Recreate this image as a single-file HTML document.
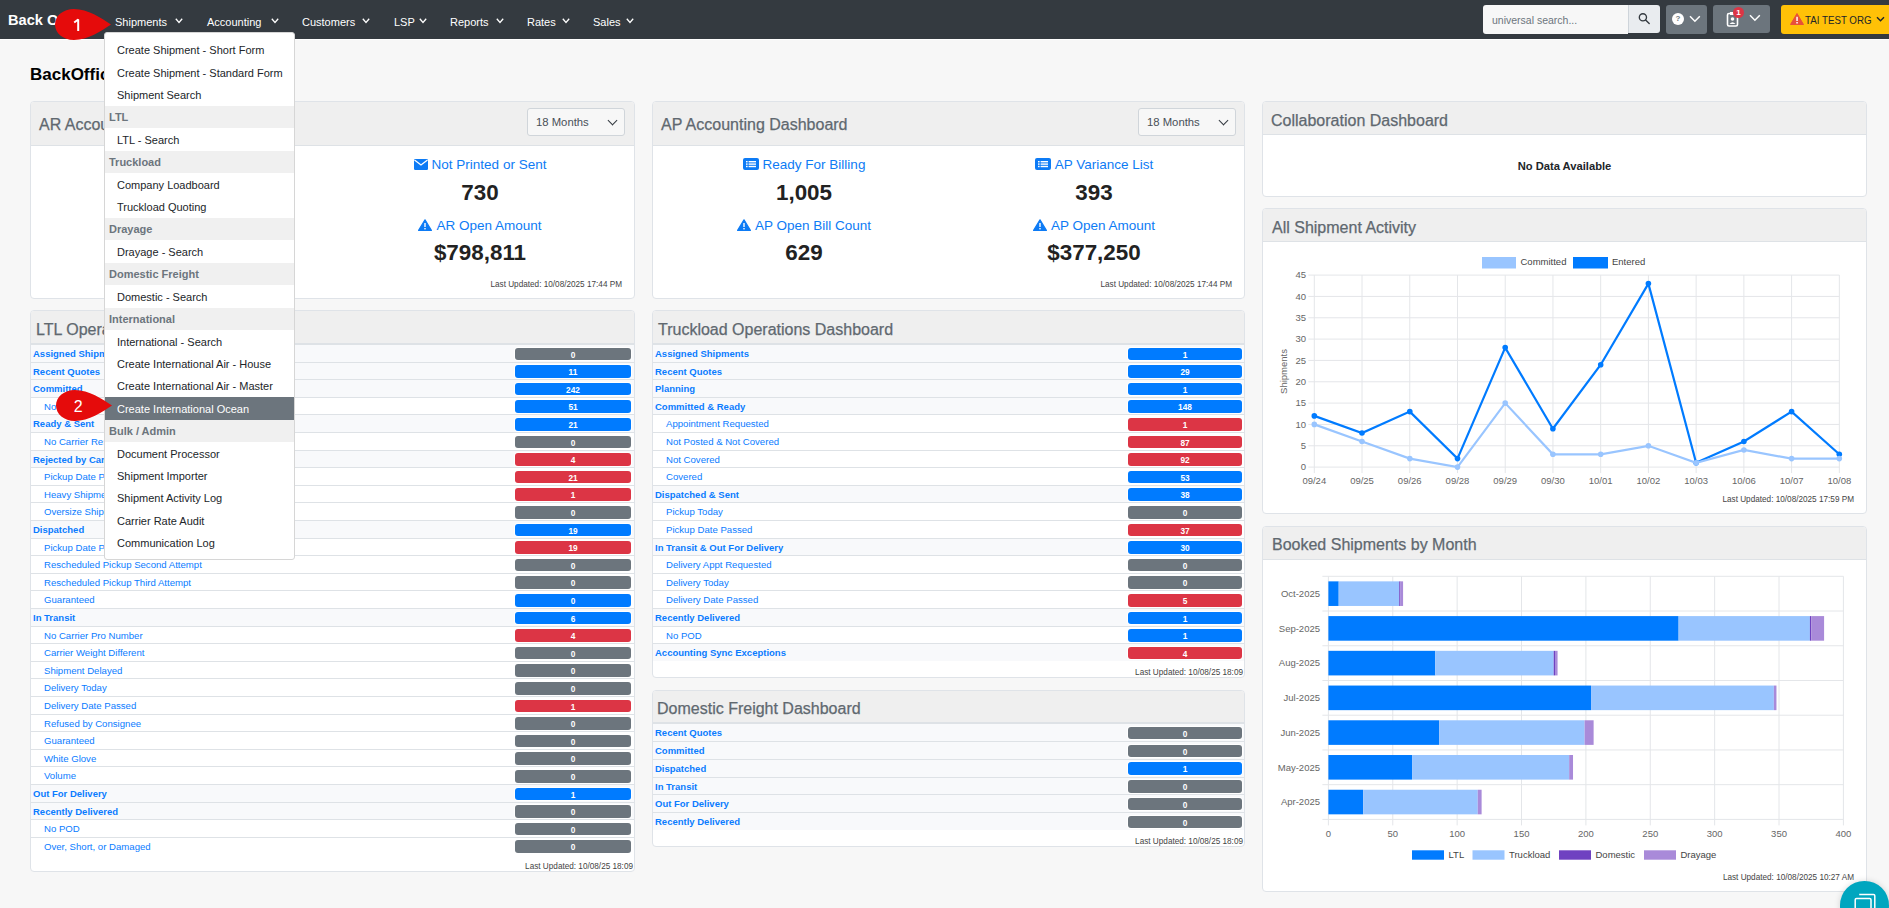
<!DOCTYPE html><html><head><meta charset="utf-8"><style>
*{box-sizing:border-box;margin:0;padding:0}
html,body{width:1889px;height:908px;overflow:hidden}
body{background:#f7f7f7;font-family:"Liberation Sans",sans-serif;position:relative;color:#212529}
.t{position:absolute;white-space:nowrap}
.nav{position:absolute;left:0;top:0;width:1889px;height:39px;background:#343a40;border-bottom:0}
.navline{position:absolute;left:0;top:39px;width:1889px;height:1px;background:#fff}
.brand{position:absolute;left:8px;top:11px;font-size:14.6px;font-weight:bold;color:#fff;line-height:18px;white-space:nowrap}
.ni{position:absolute;top:14.5px;font-size:11px;color:#fff;line-height:14px;white-space:nowrap}
.chev{position:absolute;width:5px;height:5px;border-right:1.3px solid #fff;border-bottom:1.3px solid #fff;transform:rotate(45deg)}
.card{position:absolute;background:#fff;border:1px solid #dfe3e8;border-radius:4px}
.ch{position:absolute;left:0;top:0;right:0;background:#efefef;border-bottom:1px solid #dee2e6;border-radius:3px 3px 0 0}
.ct{position:absolute;font-size:16px;color:#60686f;white-space:nowrap;line-height:20px;-webkit-text-stroke:0.25px #60686f}
.sel{position:absolute;background:#f7f7f7;border:1px solid #d0d5da;border-radius:3px;font-size:11.3px;color:#495057;line-height:14px}
.lu{position:absolute;font-size:8.2px;color:#444;white-space:nowrap;line-height:10px}
.lbl{position:absolute;font-size:13.5px;color:#0d7bf5;white-space:nowrap;line-height:16px;text-align:center}
.num{position:absolute;font-size:22.4px;font-weight:bold;color:#222;white-space:nowrap;line-height:24px;text-align:center}
.row{position:absolute;left:0;right:0;border-top:1px solid #dee2e6;background:#fff}
.row.b{background:#f8f9fb}
.row span{position:absolute;left:2px;font-size:9.6px;line-height:12px;color:#0a7cff;white-space:nowrap}
.row.b span{font-weight:bold;font-size:9.5px}
.row.s span{left:13px}
.bd{position:absolute;height:12.7px;border-radius:3px;color:#fff;font-size:8.3px;font-weight:bold;line-height:14.2px;text-align:center;box-shadow:0 0 0 1px #fff}
.g{background:#6c757d}.bl{background:#007bff}.r{background:#dc3545}
.dd{position:absolute;left:104px;top:32px;width:191px;height:528px;background:#fff;border:1px solid #d6d6d6;border-radius:3px;overflow:hidden}
.di{position:absolute;left:0;right:0;font-size:11px;color:#212529;padding-left:12px;white-space:nowrap}
.dh{position:absolute;left:0;right:0;font-size:11px;font-weight:bold;color:#6c757d;padding-left:4px;background:#f0f0f0;white-space:nowrap}
.di.act{background:#6c757d;color:#fff}
</style></head><body>
<div class="nav">
<div class="brand">Back Office</div>
<div class="ni" style="left:115px">Shipments</div><svg style="position:absolute;left:174.5px;top:18px" width="8" height="6" viewBox="0 0 8 6"><polyline points="0.8,0.8 4,4.4 7.2,0.8" fill="none" stroke="#fff" stroke-width="1.3"/></svg>
<div class="ni" style="left:207px">Accounting</div><svg style="position:absolute;left:270.5px;top:18px" width="8" height="6" viewBox="0 0 8 6"><polyline points="0.8,0.8 4,4.4 7.2,0.8" fill="none" stroke="#fff" stroke-width="1.3"/></svg>
<div class="ni" style="left:302px">Customers</div><svg style="position:absolute;left:361.5px;top:18px" width="8" height="6" viewBox="0 0 8 6"><polyline points="0.8,0.8 4,4.4 7.2,0.8" fill="none" stroke="#fff" stroke-width="1.3"/></svg>
<div class="ni" style="left:394px">LSP</div><svg style="position:absolute;left:418.5px;top:18px" width="8" height="6" viewBox="0 0 8 6"><polyline points="0.8,0.8 4,4.4 7.2,0.8" fill="none" stroke="#fff" stroke-width="1.3"/></svg>
<div class="ni" style="left:450px">Reports</div><svg style="position:absolute;left:495.5px;top:18px" width="8" height="6" viewBox="0 0 8 6"><polyline points="0.8,0.8 4,4.4 7.2,0.8" fill="none" stroke="#fff" stroke-width="1.3"/></svg>
<div class="ni" style="left:527px">Rates</div><svg style="position:absolute;left:561.5px;top:18px" width="8" height="6" viewBox="0 0 8 6"><polyline points="0.8,0.8 4,4.4 7.2,0.8" fill="none" stroke="#fff" stroke-width="1.3"/></svg>
<div class="ni" style="left:593px">Sales</div><svg style="position:absolute;left:625.5px;top:18px" width="8" height="6" viewBox="0 0 8 6"><polyline points="0.8,0.8 4,4.4 7.2,0.8" fill="none" stroke="#fff" stroke-width="1.3"/></svg>
<div style="position:absolute;left:1483px;top:5px;width:145px;height:29px;background:#f7f7f7;border-radius:3px 0 0 3px"></div>
<div class="t" style="left:1492px;top:13px;font-size:10.5px;line-height:14px;color:#6c757d">universal search...</div>
<div style="position:absolute;left:1628px;top:5px;width:32px;height:28px;background:#e9ecef;border-radius:0 3px 3px 0;border-left:1px solid #ced4da"></div>
<svg style="position:absolute;left:1637px;top:12px" width="14" height="14" viewBox="0 0 14 14"><circle cx="5.9" cy="5.3" r="3.6" fill="none" stroke="#343a40" stroke-width="1.35"/><line x1="8.6" y1="8.1" x2="12.2" y2="11.6" stroke="#343a40" stroke-width="1.4" stroke-linecap="round"/></svg>
<div style="position:absolute;left:1666px;top:5px;width:41px;height:29px;background:#6c757d;border-radius:3px"></div>
<div style="position:absolute;left:1672px;top:13px;width:12px;height:12px;border-radius:50%;background:#fff;color:#6c757d;font-size:8px;font-weight:bold;text-align:center;line-height:12px">?</div>
<svg style="position:absolute;left:1689px;top:15px" width="12" height="8" viewBox="0 0 12 8"><polyline points="1,1.2 5.9,6.2 10.8,1.2" fill="none" stroke="#fff" stroke-width="1.5"/></svg>
<div style="position:absolute;left:1713px;top:5px;width:57px;height:28px;background:#6c757d;border-radius:3px"></div>
<svg style="position:absolute;left:1726px;top:11px" width="14" height="16" viewBox="0 0 14 16"><rect x="1.5" y="2.5" width="10" height="12.5" rx="1.5" fill="none" stroke="#fff" stroke-width="1.6"/><circle cx="6.5" cy="8" r="1.8" fill="#fff"/><path d="M3.5 13 Q6.5 9.5 9.5 13" fill="#fff"/><rect x="4" y="1" width="5" height="3" fill="#fff"/></svg>
<div style="position:absolute;left:1733px;top:6.5px;width:11px;height:11px;border-radius:50%;background:#dc3545;color:#fff;font-size:8px;font-weight:bold;text-align:center;line-height:11px">1</div>
<svg style="position:absolute;left:1749px;top:14px" width="12" height="8" viewBox="0 0 12 8"><polyline points="1,1.2 5.9,6.2 10.8,1.2" fill="none" stroke="#fff" stroke-width="1.5"/></svg>
<div style="position:absolute;left:1781px;top:5px;width:120px;height:29px;background:#ffc107;border-radius:3px"></div>
<svg style="position:absolute;left:1790px;top:13px" width="14" height="12" viewBox="0 0 14 12"><path d="M7 0.5 L13.5 11.5 L0.5 11.5 Z" fill="#e8503a" stroke="#e8503a" stroke-linejoin="round"/><rect x="6.3" y="3.8" width="1.5" height="4.2" fill="#fff"/><rect x="6.3" y="9" width="1.5" height="1.5" fill="#fff"/></svg>
<div class="t" style="left:1805px;top:12.5px;font-size:11.2px;line-height:14px;color:#212529;transform:scaleX(0.87);transform-origin:0 0">TAI TEST ORG</div>
<svg style="position:absolute;left:1876px;top:16px" width="9" height="7" viewBox="0 0 9 7"><polyline points="1,1.2 4.5,4.8 8,1.2" fill="none" stroke="#212529" stroke-width="1.4"/></svg>
</div>
<div class="navline"></div>
<div class="t" style="left:30px;top:65px;font-size:17px;font-weight:bold;line-height:20px;color:#000">BackOffice Dashboard</div>
<div class="card" style="left:30px;top:101px;width:605px;height:198px">
<div class="ch" style="height:44px"></div>
<div class="ct" style="left:8px;top:13.0px">AR Accounting Dashboard</div>
<div class="sel" style="left:496px;top:6px;width:98px;height:28px"><span style="position:absolute;left:8px;top:6px">18 Months</span><span class="chev" style="left:81px;top:7.5px;width:7px;height:7px;border-color:#343a40;border-width:0 1.4px 1.4px 0"></span></div>
<div class="lbl" style="left:4px;width:300px;top:55px"><svg width="14" height="11" viewBox="0 0 14 11" style="vertical-align:-1px;margin-right:4px"><rect x="0" y="0" width="14" height="11" rx="1.2" fill="#0d7bf5"/><path d="M0.5 1 L7 6 L13.5 1" fill="none" stroke="#fff" stroke-width="1.3"/></svg>Not Invoiced</div>
<div class="num" style="left:4px;width:300px;top:79px">12</div>
<div class="lbl" style="left:299px;width:300px;top:55px"><svg width="14" height="11" viewBox="0 0 14 11" style="vertical-align:-1px;margin-right:4px"><rect x="0" y="0" width="14" height="11" rx="1.2" fill="#0d7bf5"/><path d="M0.5 1 L7 6 L13.5 1" fill="none" stroke="#fff" stroke-width="1.3"/></svg>Not Printed or Sent</div>
<div class="num" style="left:299px;width:300px;top:79px">730</div>
<div class="lbl" style="left:4px;width:300px;top:116px"><svg width="14" height="12" viewBox="0 0 14 12" style="vertical-align:-1px;margin-right:4px"><path d="M7 0.8 L13.4 11.4 L0.6 11.4 Z" fill="#0d7bf5" stroke="#0d7bf5" stroke-width="1.2" stroke-linejoin="round"/><rect x="6.3" y="4" width="1.4" height="4" fill="#fff"/><rect x="6.3" y="9" width="1.4" height="1.4" fill="#fff"/></svg>AR Overdue</div>
<div class="num" style="left:4px;width:300px;top:139px">$1</div>
<div class="lbl" style="left:299px;width:300px;top:116px"><svg width="14" height="12" viewBox="0 0 14 12" style="vertical-align:-1px;margin-right:4px"><path d="M7 0.8 L13.4 11.4 L0.6 11.4 Z" fill="#0d7bf5" stroke="#0d7bf5" stroke-width="1.2" stroke-linejoin="round"/><rect x="6.3" y="4" width="1.4" height="4" fill="#fff"/><rect x="6.3" y="9" width="1.4" height="1.4" fill="#fff"/></svg>AR Open Amount</div>
<div class="num" style="left:299px;width:300px;top:139px">$798,811</div>
<div class="lu" style="right:12px;top:178px">Last Updated: 10/08/2025 17:44 PM</div>
</div>
<div class="card" style="left:652px;top:101px;width:593px;height:198px">
<div class="ch" style="height:44px"></div>
<div class="ct" style="left:8px;top:13.0px">AP Accounting Dashboard</div>
<div class="sel" style="left:485px;top:6px;width:98px;height:28px"><span style="position:absolute;left:8px;top:6px">18 Months</span><span class="chev" style="left:81px;top:7.5px;width:7px;height:7px;border-color:#343a40;border-width:0 1.4px 1.4px 0"></span></div>
<div class="lbl" style="left:1px;width:300px;top:55px"><svg width="16" height="12" viewBox="0 0 16 12" style="vertical-align:-1px;margin-right:4px"><rect x="0" y="0" width="16" height="12" rx="2" fill="#0d7bf5"/><rect x="3" y="3" width="1.6" height="1.4" fill="#fff"/><rect x="3" y="5.4" width="1.6" height="1.4" fill="#fff"/><rect x="3" y="7.8" width="1.6" height="1.4" fill="#fff"/><rect x="5.6" y="3" width="7.4" height="1.4" fill="#fff"/><rect x="5.6" y="5.4" width="7.4" height="1.4" fill="#fff"/><rect x="5.6" y="7.8" width="7.4" height="1.4" fill="#fff"/></svg>Ready For Billing</div>
<div class="num" style="left:1px;width:300px;top:79px">1,005</div>
<div class="lbl" style="left:291px;width:300px;top:55px"><svg width="16" height="12" viewBox="0 0 16 12" style="vertical-align:-1px;margin-right:4px"><rect x="0" y="0" width="16" height="12" rx="2" fill="#0d7bf5"/><rect x="3" y="3" width="1.6" height="1.4" fill="#fff"/><rect x="3" y="5.4" width="1.6" height="1.4" fill="#fff"/><rect x="3" y="7.8" width="1.6" height="1.4" fill="#fff"/><rect x="5.6" y="3" width="7.4" height="1.4" fill="#fff"/><rect x="5.6" y="5.4" width="7.4" height="1.4" fill="#fff"/><rect x="5.6" y="7.8" width="7.4" height="1.4" fill="#fff"/></svg>AP Variance List</div>
<div class="num" style="left:291px;width:300px;top:79px">393</div>
<div class="lbl" style="left:1px;width:300px;top:116px"><svg width="14" height="12" viewBox="0 0 14 12" style="vertical-align:-1px;margin-right:4px"><path d="M7 0.8 L13.4 11.4 L0.6 11.4 Z" fill="#0d7bf5" stroke="#0d7bf5" stroke-width="1.2" stroke-linejoin="round"/><rect x="6.3" y="4" width="1.4" height="4" fill="#fff"/><rect x="6.3" y="9" width="1.4" height="1.4" fill="#fff"/></svg>AP Open Bill Count</div>
<div class="num" style="left:1px;width:300px;top:139px">629</div>
<div class="lbl" style="left:291px;width:300px;top:116px"><svg width="14" height="12" viewBox="0 0 14 12" style="vertical-align:-1px;margin-right:4px"><path d="M7 0.8 L13.4 11.4 L0.6 11.4 Z" fill="#0d7bf5" stroke="#0d7bf5" stroke-width="1.2" stroke-linejoin="round"/><rect x="6.3" y="4" width="1.4" height="4" fill="#fff"/><rect x="6.3" y="9" width="1.4" height="1.4" fill="#fff"/></svg>AP Open Amount</div>
<div class="num" style="left:291px;width:300px;top:139px">$377,250</div>
<div class="lu" style="right:12px;top:178px">Last Updated: 10/08/2025 17:44 PM</div>
</div>
<div class="card" style="left:1262px;top:101px;width:605px;height:96px">
<div class="ch" style="height:33px"></div>
<div class="ct" style="left:8px;top:8.5px">Collaboration Dashboard</div>
<div class="t" style="left:0;width:603px;text-align:center;top:57px;font-size:11.2px;font-weight:bold;line-height:14px;color:#212529">No Data Available</div>
</div>
<div class="card" style="left:30px;top:310px;width:605px;height:562px">
<div class="ch" style="height:33px"></div>
<div class="ct" style="left:5px;top:8.5px">LTL Operations Dashboard</div>
<div class="row b" style="top:33.00px;height:17.6px"><span style="top:3px">Assigned Shipments</span><div class="bd g" style="left:484px;width:116px;top:2.5px">0</div></div>
<div class="row b" style="top:50.60px;height:17.6px"><span style="top:3px">Recent Quotes</span><div class="bd bl" style="left:484px;width:116px;top:2.5px">11</div></div>
<div class="row b" style="top:68.20px;height:17.6px"><span style="top:3px">Committed</span><div class="bd bl" style="left:484px;width:116px;top:2.5px">242</div></div>
<div class="row s" style="top:85.80px;height:17.6px"><span style="top:3px">No Carrier Assigned</span><div class="bd bl" style="left:484px;width:116px;top:2.5px">51</div></div>
<div class="row b" style="top:103.40px;height:17.6px"><span style="top:3px">Ready &amp; Sent</span><div class="bd bl" style="left:484px;width:116px;top:2.5px">21</div></div>
<div class="row s" style="top:121.00px;height:17.6px"><span style="top:3px">No Carrier Response</span><div class="bd g" style="left:484px;width:116px;top:2.5px">0</div></div>
<div class="row b" style="top:138.60px;height:17.6px"><span style="top:3px">Rejected by Carrier</span><div class="bd r" style="left:484px;width:116px;top:2.5px">4</div></div>
<div class="row s" style="top:156.20px;height:17.6px"><span style="top:3px">Pickup Date Passed</span><div class="bd r" style="left:484px;width:116px;top:2.5px">21</div></div>
<div class="row s" style="top:173.80px;height:17.6px"><span style="top:3px">Heavy Shipments</span><div class="bd r" style="left:484px;width:116px;top:2.5px">1</div></div>
<div class="row s" style="top:191.40px;height:17.6px"><span style="top:3px">Oversize Shipments</span><div class="bd g" style="left:484px;width:116px;top:2.5px">0</div></div>
<div class="row b" style="top:209.00px;height:17.6px"><span style="top:3px">Dispatched</span><div class="bd bl" style="left:484px;width:116px;top:2.5px">19</div></div>
<div class="row s" style="top:226.60px;height:17.6px"><span style="top:3px">Pickup Date Passed</span><div class="bd r" style="left:484px;width:116px;top:2.5px">19</div></div>
<div class="row s" style="top:244.20px;height:17.6px"><span style="top:3px">Rescheduled Pickup Second Attempt</span><div class="bd g" style="left:484px;width:116px;top:2.5px">0</div></div>
<div class="row s" style="top:261.80px;height:17.6px"><span style="top:3px">Rescheduled Pickup Third Attempt</span><div class="bd g" style="left:484px;width:116px;top:2.5px">0</div></div>
<div class="row s" style="top:279.40px;height:17.6px"><span style="top:3px">Guaranteed</span><div class="bd bl" style="left:484px;width:116px;top:2.5px">0</div></div>
<div class="row b" style="top:297.00px;height:17.6px"><span style="top:3px">In Transit</span><div class="bd bl" style="left:484px;width:116px;top:2.5px">6</div></div>
<div class="row s" style="top:314.60px;height:17.6px"><span style="top:3px">No Carrier Pro Number</span><div class="bd r" style="left:484px;width:116px;top:2.5px">4</div></div>
<div class="row s" style="top:332.20px;height:17.6px"><span style="top:3px">Carrier Weight Different</span><div class="bd g" style="left:484px;width:116px;top:2.5px">0</div></div>
<div class="row s" style="top:349.80px;height:17.6px"><span style="top:3px">Shipment Delayed</span><div class="bd g" style="left:484px;width:116px;top:2.5px">0</div></div>
<div class="row s" style="top:367.40px;height:17.6px"><span style="top:3px">Delivery Today</span><div class="bd g" style="left:484px;width:116px;top:2.5px">0</div></div>
<div class="row s" style="top:385.00px;height:17.6px"><span style="top:3px">Delivery Date Passed</span><div class="bd r" style="left:484px;width:116px;top:2.5px">1</div></div>
<div class="row s" style="top:402.60px;height:17.6px"><span style="top:3px">Refused by Consignee</span><div class="bd g" style="left:484px;width:116px;top:2.5px">0</div></div>
<div class="row s" style="top:420.20px;height:17.6px"><span style="top:3px">Guaranteed</span><div class="bd g" style="left:484px;width:116px;top:2.5px">0</div></div>
<div class="row s" style="top:437.80px;height:17.6px"><span style="top:3px">White Glove</span><div class="bd g" style="left:484px;width:116px;top:2.5px">0</div></div>
<div class="row s" style="top:455.40px;height:17.6px"><span style="top:3px">Volume</span><div class="bd g" style="left:484px;width:116px;top:2.5px">0</div></div>
<div class="row b" style="top:473.00px;height:17.6px"><span style="top:3px">Out For Delivery</span><div class="bd bl" style="left:484px;width:116px;top:2.5px">1</div></div>
<div class="row b" style="top:490.60px;height:17.6px"><span style="top:3px">Recently Delivered</span><div class="bd g" style="left:484px;width:116px;top:2.5px">0</div></div>
<div class="row s" style="top:508.20px;height:17.6px"><span style="top:3px">No POD</span><div class="bd g" style="left:484px;width:116px;top:2.5px">0</div></div>
<div class="row s" style="top:525.80px;height:17.6px"><span style="top:3px">Over, Short, or Damaged</span><div class="bd g" style="left:484px;width:116px;top:2.5px">0</div></div>
<div class="lu" style="right:1px;bottom:-1.2px">Last Updated: 10/08/25 18:09</div>
</div>
<div class="card" style="left:652px;top:310px;width:593px;height:368px">
<div class="ch" style="height:33px"></div>
<div class="ct" style="left:5px;top:8.5px">Truckload Operations Dashboard</div>
<div class="row b" style="top:33.00px;height:17.6px"><span style="top:3px">Assigned Shipments</span><div class="bd bl" style="left:475px;width:114px;top:2.5px">1</div></div>
<div class="row b" style="top:50.60px;height:17.6px"><span style="top:3px">Recent Quotes</span><div class="bd bl" style="left:475px;width:114px;top:2.5px">29</div></div>
<div class="row b" style="top:68.20px;height:17.6px"><span style="top:3px">Planning</span><div class="bd bl" style="left:475px;width:114px;top:2.5px">1</div></div>
<div class="row b" style="top:85.80px;height:17.6px"><span style="top:3px">Committed &amp; Ready</span><div class="bd bl" style="left:475px;width:114px;top:2.5px">148</div></div>
<div class="row s" style="top:103.40px;height:17.6px"><span style="top:3px">Appointment Requested</span><div class="bd r" style="left:475px;width:114px;top:2.5px">1</div></div>
<div class="row s" style="top:121.00px;height:17.6px"><span style="top:3px">Not Posted &amp; Not Covered</span><div class="bd r" style="left:475px;width:114px;top:2.5px">87</div></div>
<div class="row s" style="top:138.60px;height:17.6px"><span style="top:3px">Not Covered</span><div class="bd r" style="left:475px;width:114px;top:2.5px">92</div></div>
<div class="row s" style="top:156.20px;height:17.6px"><span style="top:3px">Covered</span><div class="bd bl" style="left:475px;width:114px;top:2.5px">53</div></div>
<div class="row b" style="top:173.80px;height:17.6px"><span style="top:3px">Dispatched &amp; Sent</span><div class="bd bl" style="left:475px;width:114px;top:2.5px">38</div></div>
<div class="row s" style="top:191.40px;height:17.6px"><span style="top:3px">Pickup Today</span><div class="bd g" style="left:475px;width:114px;top:2.5px">0</div></div>
<div class="row s" style="top:209.00px;height:17.6px"><span style="top:3px">Pickup Date Passed</span><div class="bd r" style="left:475px;width:114px;top:2.5px">37</div></div>
<div class="row b" style="top:226.60px;height:17.6px"><span style="top:3px">In Transit &amp; Out For Delivery</span><div class="bd bl" style="left:475px;width:114px;top:2.5px">30</div></div>
<div class="row s" style="top:244.20px;height:17.6px"><span style="top:3px">Delivery Appt Requested</span><div class="bd g" style="left:475px;width:114px;top:2.5px">0</div></div>
<div class="row s" style="top:261.80px;height:17.6px"><span style="top:3px">Delivery Today</span><div class="bd g" style="left:475px;width:114px;top:2.5px">0</div></div>
<div class="row s" style="top:279.40px;height:17.6px"><span style="top:3px">Delivery Date Passed</span><div class="bd r" style="left:475px;width:114px;top:2.5px">5</div></div>
<div class="row b" style="top:297.00px;height:17.6px"><span style="top:3px">Recently Delivered</span><div class="bd bl" style="left:475px;width:114px;top:2.5px">1</div></div>
<div class="row s" style="top:314.60px;height:17.6px"><span style="top:3px">No POD</span><div class="bd bl" style="left:475px;width:114px;top:2.5px">1</div></div>
<div class="row b" style="top:332.20px;height:17.6px"><span style="top:3px">Accounting Sync Exceptions</span><div class="bd r" style="left:475px;width:114px;top:2.5px">4</div></div>
<div class="lu" style="right:1px;bottom:-1.2px">Last Updated: 10/08/25 18:09</div>
</div>
<div class="card" style="left:652px;top:690px;width:593px;height:157px">
<div class="ch" style="height:32px"></div>
<div class="ct" style="left:4px;top:7.5px">Domestic Freight Dashboard</div>
<div class="row b" style="top:32.25px;height:17.75px"><span style="top:3px">Recent Quotes</span><div class="bd g" style="left:475px;width:114px;top:2.5px">0</div></div>
<div class="row b" style="top:50.00px;height:17.75px"><span style="top:3px">Committed</span><div class="bd g" style="left:475px;width:114px;top:2.5px">0</div></div>
<div class="row b" style="top:67.75px;height:17.75px"><span style="top:3px">Dispatched</span><div class="bd bl" style="left:475px;width:114px;top:2.5px">1</div></div>
<div class="row b" style="top:85.50px;height:17.75px"><span style="top:3px">In Transit</span><div class="bd g" style="left:475px;width:114px;top:2.5px">0</div></div>
<div class="row b" style="top:103.25px;height:17.75px"><span style="top:3px">Out For Delivery</span><div class="bd g" style="left:475px;width:114px;top:2.5px">0</div></div>
<div class="row b" style="top:121.00px;height:17.75px"><span style="top:3px">Recently Delivered</span><div class="bd g" style="left:475px;width:114px;top:2.5px">0</div></div>
<div class="lu" style="right:1px;bottom:-1.2px">Last Updated: 10/08/25 18:09</div>
</div>
<div class="card" style="left:1262px;top:208px;width:605px;height:306px">
<div class="ch" style="height:33px"></div>
<div class="ct" style="left:9px;top:8.5px">All Shipment Activity</div>
<div class="lu" style="right:12px;top:286px">Last Updated: 10/08/2025 17:59 PM</div>
</div>
<div class="card" style="left:1262px;top:526px;width:605px;height:366px">
<div class="ch" style="height:33px"></div>
<div class="ct" style="left:9px;top:7.5px">Booked Shipments by Month</div>
<div class="lu" style="right:12px;top:346px">Last Updated: 10/08/2025 10:27 AM</div>
</div>
<svg style="position:absolute;left:0;top:0" width="1889" height="908" font-family="Liberation Sans, sans-serif"><line x1="1314.3" y1="275.1" x2="1314.3" y2="473.1" stroke="#e4e6e9" stroke-width="1"/><line x1="1362.03" y1="275.1" x2="1362.03" y2="473.1" stroke="#e4e6e9" stroke-width="1"/><line x1="1409.76" y1="275.1" x2="1409.76" y2="473.1" stroke="#e4e6e9" stroke-width="1"/><line x1="1457.49" y1="275.1" x2="1457.49" y2="473.1" stroke="#e4e6e9" stroke-width="1"/><line x1="1505.22" y1="275.1" x2="1505.22" y2="473.1" stroke="#e4e6e9" stroke-width="1"/><line x1="1552.9499999999998" y1="275.1" x2="1552.9499999999998" y2="473.1" stroke="#e4e6e9" stroke-width="1"/><line x1="1600.6799999999998" y1="275.1" x2="1600.6799999999998" y2="473.1" stroke="#e4e6e9" stroke-width="1"/><line x1="1648.4099999999999" y1="275.1" x2="1648.4099999999999" y2="473.1" stroke="#e4e6e9" stroke-width="1"/><line x1="1696.1399999999999" y1="275.1" x2="1696.1399999999999" y2="473.1" stroke="#e4e6e9" stroke-width="1"/><line x1="1743.87" y1="275.1" x2="1743.87" y2="473.1" stroke="#e4e6e9" stroke-width="1"/><line x1="1791.6" y1="275.1" x2="1791.6" y2="473.1" stroke="#e4e6e9" stroke-width="1"/><line x1="1839.33" y1="275.1" x2="1839.33" y2="473.1" stroke="#e4e6e9" stroke-width="1"/><line x1="1308.3" y1="467.1" x2="1839.33" y2="467.1" stroke="#e4e6e9" stroke-width="1"/><text x="1306" y="470.40000000000003" text-anchor="end" font-size="9.5" fill="#666">0</text><line x1="1308.3" y1="445.7666666666667" x2="1839.33" y2="445.7666666666667" stroke="#e4e6e9" stroke-width="1"/><text x="1306" y="449.0666666666667" text-anchor="end" font-size="9.5" fill="#666">5</text><line x1="1308.3" y1="424.43333333333334" x2="1839.33" y2="424.43333333333334" stroke="#e4e6e9" stroke-width="1"/><text x="1306" y="427.73333333333335" text-anchor="end" font-size="9.5" fill="#666">10</text><line x1="1308.3" y1="403.1" x2="1839.33" y2="403.1" stroke="#e4e6e9" stroke-width="1"/><text x="1306" y="406.40000000000003" text-anchor="end" font-size="9.5" fill="#666">15</text><line x1="1308.3" y1="381.7666666666667" x2="1839.33" y2="381.7666666666667" stroke="#e4e6e9" stroke-width="1"/><text x="1306" y="385.0666666666667" text-anchor="end" font-size="9.5" fill="#666">20</text><line x1="1308.3" y1="360.43333333333334" x2="1839.33" y2="360.43333333333334" stroke="#e4e6e9" stroke-width="1"/><text x="1306" y="363.73333333333335" text-anchor="end" font-size="9.5" fill="#666">25</text><line x1="1308.3" y1="339.1" x2="1839.33" y2="339.1" stroke="#e4e6e9" stroke-width="1"/><text x="1306" y="342.40000000000003" text-anchor="end" font-size="9.5" fill="#666">30</text><line x1="1308.3" y1="317.76666666666665" x2="1839.33" y2="317.76666666666665" stroke="#e4e6e9" stroke-width="1"/><text x="1306" y="321.06666666666666" text-anchor="end" font-size="9.5" fill="#666">35</text><line x1="1308.3" y1="296.4333333333334" x2="1839.33" y2="296.4333333333334" stroke="#e4e6e9" stroke-width="1"/><text x="1306" y="299.7333333333334" text-anchor="end" font-size="9.5" fill="#666">40</text><line x1="1308.3" y1="275.1" x2="1839.33" y2="275.1" stroke="#e4e6e9" stroke-width="1"/><text x="1306" y="278.40000000000003" text-anchor="end" font-size="9.5" fill="#666">45</text><text x="1314.3" y="483.8" text-anchor="middle" font-size="9.5" fill="#666">09/24</text><text x="1362.03" y="483.8" text-anchor="middle" font-size="9.5" fill="#666">09/25</text><text x="1409.76" y="483.8" text-anchor="middle" font-size="9.5" fill="#666">09/26</text><text x="1457.49" y="483.8" text-anchor="middle" font-size="9.5" fill="#666">09/28</text><text x="1505.22" y="483.8" text-anchor="middle" font-size="9.5" fill="#666">09/29</text><text x="1552.9499999999998" y="483.8" text-anchor="middle" font-size="9.5" fill="#666">09/30</text><text x="1600.6799999999998" y="483.8" text-anchor="middle" font-size="9.5" fill="#666">10/01</text><text x="1648.4099999999999" y="483.8" text-anchor="middle" font-size="9.5" fill="#666">10/02</text><text x="1696.1399999999999" y="483.8" text-anchor="middle" font-size="9.5" fill="#666">10/03</text><text x="1743.87" y="483.8" text-anchor="middle" font-size="9.5" fill="#666">10/06</text><text x="1791.6" y="483.8" text-anchor="middle" font-size="9.5" fill="#666">10/07</text><text x="1839.33" y="483.8" text-anchor="middle" font-size="9.5" fill="#666">10/08</text><text transform="translate(1287,371.5) rotate(-90)" text-anchor="middle" font-size="9.5" fill="#666">Shipments</text><polyline points="1314.3,415.9 1362.0,433.0 1409.8,411.6 1457.5,458.6 1505.2,347.6 1552.9,428.7 1600.7,364.7 1648.4,283.6 1696.1,462.8 1743.9,441.5 1791.6,411.6 1839.3,454.3" fill="none" stroke="#007bff" stroke-width="2.2" stroke-linejoin="miter"/><circle cx="1314.3" cy="415.9" r="2.8" fill="#007bff"/><circle cx="1362.0" cy="433.0" r="2.8" fill="#007bff"/><circle cx="1409.8" cy="411.6" r="2.8" fill="#007bff"/><circle cx="1457.5" cy="458.6" r="2.8" fill="#007bff"/><circle cx="1505.2" cy="347.6" r="2.8" fill="#007bff"/><circle cx="1552.9" cy="428.7" r="2.8" fill="#007bff"/><circle cx="1600.7" cy="364.7" r="2.8" fill="#007bff"/><circle cx="1648.4" cy="283.6" r="2.8" fill="#007bff"/><circle cx="1696.1" cy="462.8" r="2.8" fill="#007bff"/><circle cx="1743.9" cy="441.5" r="2.8" fill="#007bff"/><circle cx="1791.6" cy="411.6" r="2.8" fill="#007bff"/><circle cx="1839.3" cy="454.3" r="2.8" fill="#007bff"/><polyline points="1314.3,424.4 1362.0,441.5 1409.8,458.6 1457.5,467.1 1505.2,403.1 1552.9,454.3 1600.7,454.3 1648.4,445.8 1696.1,462.8 1743.9,450.0 1791.6,458.6 1839.3,458.6" fill="none" stroke="#99c5ff" stroke-width="2.2" stroke-linejoin="miter"/><circle cx="1314.3" cy="424.4" r="2.8" fill="#99c5ff"/><circle cx="1362.0" cy="441.5" r="2.8" fill="#99c5ff"/><circle cx="1409.8" cy="458.6" r="2.8" fill="#99c5ff"/><circle cx="1457.5" cy="467.1" r="2.8" fill="#99c5ff"/><circle cx="1505.2" cy="403.1" r="2.8" fill="#99c5ff"/><circle cx="1552.9" cy="454.3" r="2.8" fill="#99c5ff"/><circle cx="1600.7" cy="454.3" r="2.8" fill="#99c5ff"/><circle cx="1648.4" cy="445.8" r="2.8" fill="#99c5ff"/><circle cx="1696.1" cy="462.8" r="2.8" fill="#99c5ff"/><circle cx="1743.9" cy="450.0" r="2.8" fill="#99c5ff"/><circle cx="1791.6" cy="458.6" r="2.8" fill="#99c5ff"/><circle cx="1839.3" cy="458.6" r="2.8" fill="#99c5ff"/><rect x="1482" y="257" width="34" height="11.5" fill="#99c5ff"/><text x="1520.5" y="264.6" font-size="9.5" fill="#444">Committed</text><rect x="1573" y="257" width="35" height="11.5" fill="#007bff"/><text x="1612" y="264.6" font-size="9.5" fill="#444">Entered</text><line x1="1328.4" y1="576.3" x2="1328.4" y2="825.4" stroke="#e4e6e9" stroke-width="1"/><text x="1328.4" y="836.5" text-anchor="middle" font-size="9.5" fill="#666">0</text><line x1="1392.775" y1="576.3" x2="1392.775" y2="825.4" stroke="#e4e6e9" stroke-width="1"/><text x="1392.775" y="836.5" text-anchor="middle" font-size="9.5" fill="#666">50</text><line x1="1457.15" y1="576.3" x2="1457.15" y2="825.4" stroke="#e4e6e9" stroke-width="1"/><text x="1457.15" y="836.5" text-anchor="middle" font-size="9.5" fill="#666">100</text><line x1="1521.525" y1="576.3" x2="1521.525" y2="825.4" stroke="#e4e6e9" stroke-width="1"/><text x="1521.525" y="836.5" text-anchor="middle" font-size="9.5" fill="#666">150</text><line x1="1585.9" y1="576.3" x2="1585.9" y2="825.4" stroke="#e4e6e9" stroke-width="1"/><text x="1585.9" y="836.5" text-anchor="middle" font-size="9.5" fill="#666">200</text><line x1="1650.275" y1="576.3" x2="1650.275" y2="825.4" stroke="#e4e6e9" stroke-width="1"/><text x="1650.275" y="836.5" text-anchor="middle" font-size="9.5" fill="#666">250</text><line x1="1714.65" y1="576.3" x2="1714.65" y2="825.4" stroke="#e4e6e9" stroke-width="1"/><text x="1714.65" y="836.5" text-anchor="middle" font-size="9.5" fill="#666">300</text><line x1="1779.025" y1="576.3" x2="1779.025" y2="825.4" stroke="#e4e6e9" stroke-width="1"/><text x="1779.025" y="836.5" text-anchor="middle" font-size="9.5" fill="#666">350</text><line x1="1843.4" y1="576.3" x2="1843.4" y2="825.4" stroke="#e4e6e9" stroke-width="1"/><text x="1843.4" y="836.5" text-anchor="middle" font-size="9.5" fill="#666">400</text><line x1="1322.4" y1="576.3" x2="1843.4" y2="576.3" stroke="#e4e6e9" stroke-width="1"/><line x1="1322.4" y1="611.0285714285714" x2="1843.4" y2="611.0285714285714" stroke="#e4e6e9" stroke-width="1"/><line x1="1322.4" y1="645.7571428571429" x2="1843.4" y2="645.7571428571429" stroke="#e4e6e9" stroke-width="1"/><line x1="1322.4" y1="680.4857142857143" x2="1843.4" y2="680.4857142857143" stroke="#e4e6e9" stroke-width="1"/><line x1="1322.4" y1="715.2142857142857" x2="1843.4" y2="715.2142857142857" stroke="#e4e6e9" stroke-width="1"/><line x1="1322.4" y1="749.9428571428571" x2="1843.4" y2="749.9428571428571" stroke="#e4e6e9" stroke-width="1"/><line x1="1322.4" y1="784.6714285714286" x2="1843.4" y2="784.6714285714286" stroke="#e4e6e9" stroke-width="1"/><line x1="1322.4" y1="819.4" x2="1843.4" y2="819.4" stroke="#e4e6e9" stroke-width="1"/><text x="1320" y="596.9642857142857" text-anchor="end" font-size="9.5" fill="#666">Oct-2025</text><rect x="1328.40" y="581.36" width="10.30" height="24.6" fill="#007bff"/><rect x="1338.70" y="581.36" width="60.51" height="24.6" fill="#99c5ff"/><rect x="1399.21" y="581.36" width="1.29" height="24.6" fill="#6f42c1"/><rect x="1400.50" y="581.36" width="2.58" height="24.6" fill="#a98ad9"/><text x="1320" y="631.6928571428571" text-anchor="end" font-size="9.5" fill="#666">Sep-2025</text><rect x="1328.40" y="616.09" width="350.20" height="24.6" fill="#007bff"/><rect x="1678.60" y="616.09" width="131.33" height="24.6" fill="#99c5ff"/><rect x="1809.93" y="616.09" width="1.29" height="24.6" fill="#6f42c1"/><rect x="1811.21" y="616.09" width="12.88" height="24.6" fill="#a98ad9"/><text x="1320" y="666.4214285714285" text-anchor="end" font-size="9.5" fill="#666">Aug-2025</text><rect x="1328.40" y="650.82" width="106.86" height="24.6" fill="#007bff"/><rect x="1435.26" y="650.82" width="118.45" height="24.6" fill="#99c5ff"/><rect x="1553.71" y="650.82" width="1.29" height="24.6" fill="#6f42c1"/><rect x="1555.00" y="650.82" width="2.58" height="24.6" fill="#a98ad9"/><text x="1320" y="701.15" text-anchor="end" font-size="9.5" fill="#666">Jul-2025</text><rect x="1328.40" y="685.55" width="262.65" height="24.6" fill="#007bff"/><rect x="1591.05" y="685.55" width="182.83" height="24.6" fill="#99c5ff"/><rect x="1773.88" y="685.55" width="2.58" height="24.6" fill="#a98ad9"/><text x="1320" y="735.8785714285714" text-anchor="end" font-size="9.5" fill="#666">Jun-2025</text><rect x="1328.40" y="720.28" width="110.73" height="24.6" fill="#007bff"/><rect x="1439.12" y="720.28" width="145.49" height="24.6" fill="#99c5ff"/><rect x="1584.61" y="720.28" width="9.01" height="24.6" fill="#a98ad9"/><text x="1320" y="770.6071428571428" text-anchor="end" font-size="9.5" fill="#666">May-2025</text><rect x="1328.40" y="755.01" width="83.69" height="24.6" fill="#007bff"/><rect x="1412.09" y="755.01" width="157.08" height="24.6" fill="#99c5ff"/><rect x="1569.16" y="755.01" width="3.86" height="24.6" fill="#a98ad9"/><text x="1320" y="805.3357142857142" text-anchor="end" font-size="9.5" fill="#666">Apr-2025</text><rect x="1328.40" y="789.74" width="34.76" height="24.6" fill="#007bff"/><rect x="1363.16" y="789.74" width="114.59" height="24.6" fill="#99c5ff"/><rect x="1477.75" y="789.74" width="3.86" height="24.6" fill="#a98ad9"/><rect x="1412" y="850.3" width="32" height="9.4" fill="#007bff"/><text x="1448.5" y="858.2" font-size="9.5" fill="#444">LTL</text><rect x="1472.5" y="850.3" width="32" height="9.4" fill="#99c5ff"/><text x="1509.0" y="858.2" font-size="9.5" fill="#444">Truckload</text><rect x="1559" y="850.3" width="32" height="9.4" fill="#6f42c1"/><text x="1595.5" y="858.2" font-size="9.5" fill="#444">Domestic</text><rect x="1644" y="850.3" width="32" height="9.4" fill="#a98ad9"/><text x="1680.5" y="858.2" font-size="9.5" fill="#444">Drayage</text></svg>
<div style="position:absolute;left:1840px;top:881px;width:48.5px;height:48.5px;border-radius:50%;background:#00a6bf;box-shadow:0 0 6px rgba(0,0,0,0.15)"></div>
<svg style="position:absolute;left:1850px;top:890px" width="30" height="20" viewBox="0 0 30 20"><path d="M9.2 4.4 H23.5 Q24.8 4.4 24.8 5.7 V19" fill="none" stroke="#fff" stroke-width="1.5"/><rect x="5.2" y="8.5" width="15.8" height="14" rx="1.3" fill="none" stroke="#fff" stroke-width="1.5"/></svg>
<div class="dd">
<div class="di" style="top:5.90px;height:22.4px;line-height:22.4px"><span style="position:relative;top:0.6px">Create Shipment - Short Form</span></div>
<div class="di" style="top:28.30px;height:22.4px;line-height:22.4px"><span style="position:relative;top:0.6px">Create Shipment - Standard Form</span></div>
<div class="di" style="top:50.70px;height:22.4px;line-height:22.4px"><span style="position:relative;top:0.6px">Shipment Search</span></div>
<div class="dh" style="top:73.10px;height:22.4px;line-height:22.4px"><span style="position:relative;top:0.1px">LTL</span></div>
<div class="di" style="top:95.50px;height:22.4px;line-height:22.4px"><span style="position:relative;top:0.6px">LTL - Search</span></div>
<div class="dh" style="top:117.90px;height:22.4px;line-height:22.4px"><span style="position:relative;top:0.1px">Truckload</span></div>
<div class="di" style="top:140.30px;height:22.4px;line-height:22.4px"><span style="position:relative;top:0.6px">Company Loadboard</span></div>
<div class="di" style="top:162.70px;height:22.4px;line-height:22.4px"><span style="position:relative;top:0.6px">Truckload Quoting</span></div>
<div class="dh" style="top:185.10px;height:22.4px;line-height:22.4px"><span style="position:relative;top:0.1px">Drayage</span></div>
<div class="di" style="top:207.50px;height:22.4px;line-height:22.4px"><span style="position:relative;top:0.6px">Drayage - Search</span></div>
<div class="dh" style="top:229.90px;height:22.4px;line-height:22.4px"><span style="position:relative;top:0.1px">Domestic Freight</span></div>
<div class="di" style="top:252.30px;height:22.4px;line-height:22.4px"><span style="position:relative;top:0.6px">Domestic - Search</span></div>
<div class="dh" style="top:274.70px;height:22.4px;line-height:22.4px"><span style="position:relative;top:0.1px">International</span></div>
<div class="di" style="top:297.10px;height:22.4px;line-height:22.4px"><span style="position:relative;top:0.6px">International - Search</span></div>
<div class="di" style="top:319.50px;height:22.4px;line-height:22.4px"><span style="position:relative;top:0.6px">Create International Air - House</span></div>
<div class="di" style="top:341.90px;height:22.4px;line-height:22.4px"><span style="position:relative;top:0.6px">Create International Air - Master</span></div>
<div class="di act" style="top:364.30px;height:22.4px;line-height:22.4px"><span style="position:relative;top:0.6px">Create International Ocean</span></div>
<div class="dh" style="top:386.70px;height:22.4px;line-height:22.4px"><span style="position:relative;top:0.1px">Bulk / Admin</span></div>
<div class="di" style="top:409.10px;height:22.4px;line-height:22.4px"><span style="position:relative;top:0.6px">Document Processor</span></div>
<div class="di" style="top:431.50px;height:22.4px;line-height:22.4px"><span style="position:relative;top:0.6px">Shipment Importer</span></div>
<div class="di" style="top:453.90px;height:22.4px;line-height:22.4px"><span style="position:relative;top:0.6px">Shipment Activity Log</span></div>
<div class="di" style="top:476.30px;height:22.4px;line-height:22.4px"><span style="position:relative;top:0.6px">Carrier Rate Audit</span></div>
<div class="di" style="top:498.70px;height:22.4px;line-height:22.4px"><span style="position:relative;top:0.6px">Communication Log</span></div>
</div>
<svg style="position:absolute;left:54px;top:7.899999999999999px" width="60" height="33.0" viewBox="54 7.899999999999999 60 33.0"><path d="M111,24.4 C101,17.9 88,8.899999999999999 74,8.899999999999999 C63,8.899999999999999 55,15.899999999999999 55,24.4 C55,32.9 63,39.9 74,39.9 C88,39.9 101,30.9 111,24.4 Z" fill="#e50b0b"/><path d="M74.2,22.4 L78.2,19.4 L78.2,30.9" fill="none" stroke="#fff" stroke-width="2" stroke-linejoin="bevel"/></svg>
<svg style="position:absolute;left:54.8px;top:389.0px" width="60" height="33.0" viewBox="54.8 389.0 60 33.0"><path d="M111.8,405.5 C101.8,399.0 88.8,390.0 74.8,390.0 C63.8,390.0 55.8,397.0 55.8,405.5 C55.8,414.0 63.8,421.0 74.8,421.0 C88.8,421.0 101.8,412.0 111.8,405.5 Z" fill="#e50b0b"/><text x="78.1" y="411.8" text-anchor="middle" font-size="16" fill="#fff" font-family="Liberation Sans, sans-serif">2</text></svg>
</body></html>
